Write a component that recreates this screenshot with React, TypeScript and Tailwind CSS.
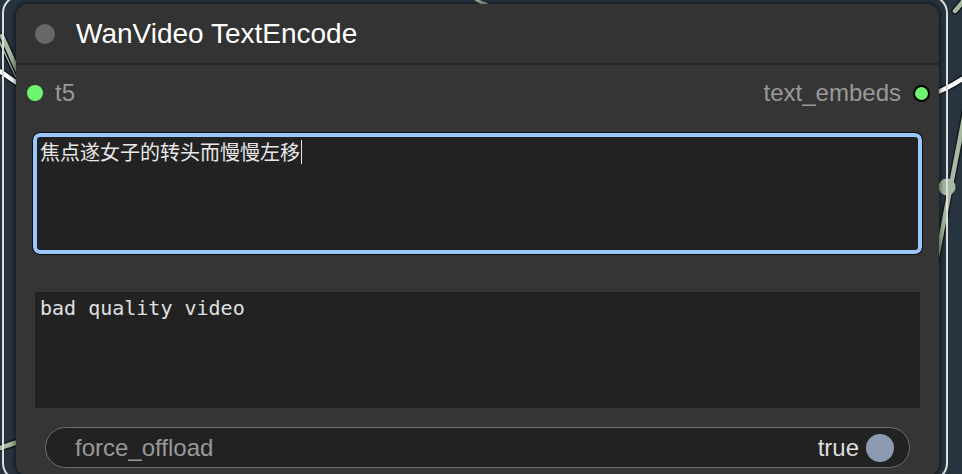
import React from "react";

const sans = { fontFamily: '"Liberation Sans", Arial, sans-serif' };

function Wire({ d, color }: { d: string; color: string }) {
  return (
    <>
      <path d={d} stroke="#141a1f" strokeWidth="7.5" />
      <path d={d} stroke={color} strokeWidth="4.5" />
    </>
  );
}

function Wires() {
  // connection lines drawn on the canvas behind the node
  return (
    <svg className="absolute inset-0" width="962" height="474" viewBox="0 0 962 474" fill="none">
      <g strokeLinecap="round">
        <Wire d="M-8 26 C 2 42, 10 60, 20 82" color="#a7b9a1" />
        <Wire d="M2 36 C 8 50, 14 62, 20 76" color="#a7b9a1" />
        <Wire d="M-6 68 C 4 73, 10 79, 22 86" color="#ffffff" />
        <Wire d="M-6 450 C 4 447, 10 444, 22 441" color="#a7b9a1" />
        <Wire d="M935 93 C 945 90, 955 84, 970 74" color="#ffffff" />
        <Wire d="M970 -8 C 964 0, 960 6, 955 11" color="#a7b9a1" />
        <Wire d="M968 96 C 958 150, 948 200, 936 262" color="#a7b9a1" />
        <path d="M472 -4 C 476 0, 480 3, 486 4" stroke="#a7b9a1" strokeWidth="3" />
      </g>
      <circle cx="947" cy="187" r="8.5" fill="#a7b9a1" />
    </svg>
  );
}

export default function App() {
  return (
    <div className="relative w-[962px] h-[474px] overflow-hidden bg-[#27343f]" style={sans}>
      <Wires />

      {/* selection outline */}
      <div className="absolute left-[2px] top-[-5px] w-[946px] h-[486px] rounded-[18px] border-2 border-[#dcdcdc]" />

      {/* node */}
      <div className="absolute left-[16px] top-[4px] w-[923px] h-[472px] rounded-[12px] bg-[#353535] shadow-[0_0_4px_2px_rgba(0,0,0,0.45)] flex flex-col overflow-hidden">
        {/* title */}
        <div className="h-[61px] shrink-0 flex items-center border-b-2 border-[#262626] bg-[#333333]">
          <div className="ml-[19px] w-[20px] h-[20px] rounded-full bg-[#686868]" />
          <span className="ml-[21px] text-[28px] text-white leading-none">WanVideo TextEncode</span>
        </div>

        {/* slots */}
        <div className="h-[56px] shrink-0 flex items-center justify-between">
          <div className="flex items-center">
            <div className="ml-[11px] w-[16px] h-[16px] rounded-full bg-[#6ff46f]" />
            <span className="ml-[12px] text-[24px] leading-none text-[#999999]">t5</span>
          </div>
          <div className="flex items-center">
            <span className="text-[24px] leading-none text-[#999999]">text_embeds</span>
            <div className="ml-[12px] mr-[9px] w-[17px] h-[17px] rounded-full bg-[#6ff46f] border-2 border-black" />
          </div>
        </div>

        {/* prompt textarea (focused) */}
        <div className="mt-[12px] mx-[17px] h-[121px] shrink-0 rounded-[7px] border-[4px] border-[#99c8ff] outline outline-1 outline-[#111111] bg-[#222222] pl-[3px] pt-[3px]">
          <div
            className="text-[20px] leading-[24px] text-[#e8e8e8] flex items-center"
            style={{ fontFamily: '"Noto Sans CJK SC", "Liberation Sans", sans-serif' }}
          >
            <span>焦点遂女子的转头而慢慢左移</span>
            <span className="inline-block w-[1px] h-[24px] bg-[#e6e6e6] ml-[1px]" />
          </div>
        </div>

        {/* negative textarea */}
        <div
          className="mt-[38px] mx-[19px] h-[116px] shrink-0 bg-[#222222] pl-[5px] pt-[4px] text-[20px] leading-[24px] text-[#e0e0e0]"
          style={{ fontFamily: '"DejaVu Sans Mono", monospace' }}
        >
          bad quality video
        </div>

        {/* toggle */}
        <div className="mt-[19px] mx-[29px] h-[41px] shrink-0 rounded-full border border-[#6e6e6e] bg-[#222222] flex items-center justify-between">
          <span className="ml-[29px] text-[24px] leading-none text-[#999999]">force_offload</span>
          <div className="flex items-center">
            <span className="text-[24px] leading-none text-[#dddddd]">true</span>
            <div className="ml-[7px] mr-[15px] w-[28px] h-[28px] rounded-full bg-[#8b9bb0]" />
          </div>
        </div>
      </div>
    </div>
  );
}
